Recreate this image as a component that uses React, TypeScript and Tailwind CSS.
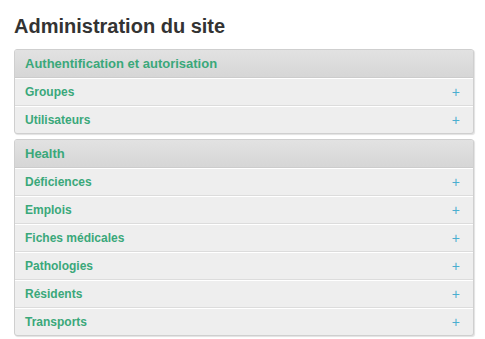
import React from 'react';

type Section = {
  name: string;
  models: string[];
};

const sections: Section[] = [
  { name: 'Authentification et autorisation', models: ['Groupes', 'Utilisateurs'] },
  {
    name: 'Health',
    models: ['Déficiences', 'Emplois', 'Fiches médicales', 'Pathologies', 'Résidents', 'Transports'],
  },
];

const ModuleBox: React.FC<{ section: Section }> = ({ section }) => (
  <div className="w-[460px] rounded-[3px] border border-[#cfcfcf] bg-[#eeeeee] shadow-[1px_1px_1px_rgba(0,0,0,0.12)] overflow-hidden">
    {/* caption */}
    <div className="h-[28px] flex items-center pl-[10px] bg-gradient-to-b from-[#e2e2e2] to-[#d6d6d6] border-b border-[#cccccc]">
      <span className="text-[13px] font-bold text-[#3aa87a]">{section.name}</span>
    </div>
    {section.models.map((m, i) => (
      <div
        key={m}
        className={`flex items-center justify-between pl-[10px] pr-[13px] border-t border-white ${
          i === section.models.length - 1 ? 'h-[27px]' : 'h-[28px] border-b border-b-[#dcdcdc]'
        }`}
      >
        <span className="text-[12px] font-bold text-[#3aa87a]">{m}</span>
        <span className="text-[14px] leading-none text-[#4aaed0]">+</span>
      </div>
    ))}
  </div>
);

const App: React.FC = () => {
  return (
    <div className="min-h-screen bg-white pl-[14px] pt-[14px] font-['Liberation_Sans',Arial,sans-serif]">
      <h1 className="text-[20px] leading-[24px] font-bold text-[#333333] mb-[11px]">Administration du site</h1>
      <div className="flex flex-col gap-[5px]">
        {sections.map((s) => (
          <ModuleBox key={s.name} section={s} />
        ))}
      </div>
    </div>
  );
};

export default App;
